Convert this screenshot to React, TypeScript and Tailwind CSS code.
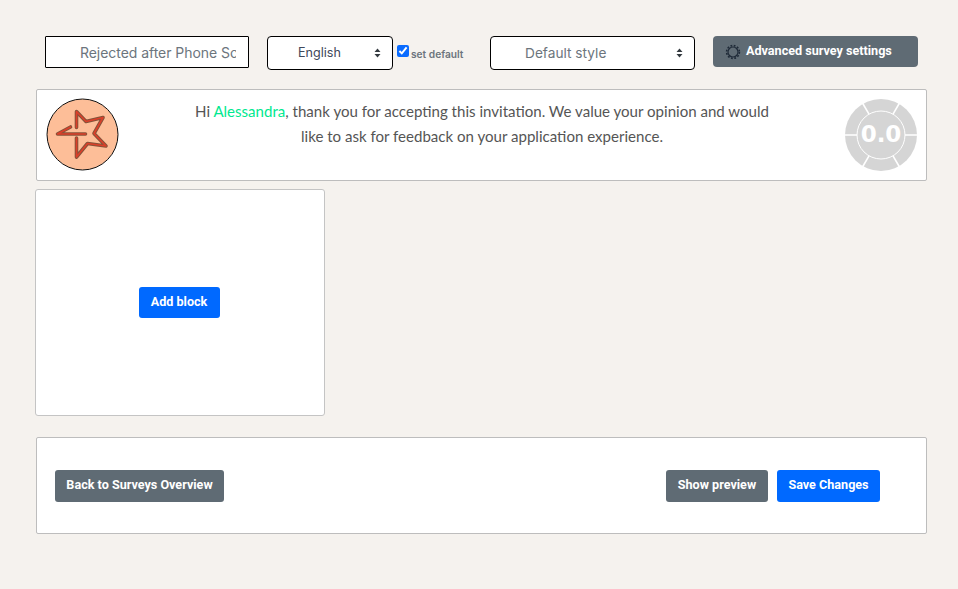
import React from "react";

const Arrows = () => (
  <svg width="7" height="10" viewBox="0 0 7 10" className="absolute right-[12px] top-[12px] pointer-events-none">
    <path d="M3.5 0.5 L6.5 4 H0.5 Z M3.5 9.5 L6.5 6 H0.5 Z" fill="#343a40" />
  </svg>
);

const StarLogo = () => (
  <svg width="74" height="74" viewBox="0 0 74 74" className="shrink-0">
    <circle cx="36.5" cy="36.5" r="35.5" fill="#fdbe98" stroke="#111" strokeWidth="1" />
    <g fill="none" strokeLinecap="round" strokeLinejoin="round">
      <g stroke="#85533a" strokeWidth="3.6">
        <path d="M30.5 29.5 V13.5 L40 23.5 L57 19.5 L48 35.5 L60 48 L41.5 45.5 L30.5 59 V40" />
        <path d="M39.5 36 H11.5 L24.5 29" />
      </g>
      <g stroke="#dc3f29" strokeWidth="1.6">
        <path d="M30.5 29.5 V13.5 L40 23.5 L57 19.5 L48 35.5 L60 48 L41.5 45.5 L30.5 59 V40" />
        <path d="M39.5 36 H11.5 L24.5 29" />
      </g>
    </g>
  </svg>
);

const Gauge = () => (
  <div className="relative w-[74px] h-[74px] shrink-0">
    <svg width="74" height="74" viewBox="0 0 74 74">
      <circle cx="37" cy="37" r="36" fill="#d5d5d5" />
      <circle cx="37" cy="37" r="24" fill="none" stroke="#fff" strokeWidth="1" />
      <g stroke="#fff" strokeWidth="1.6">
        <path d="M0 37 H13 M61 37 H74" />
        <path d="M18.5 5 L25 16.2 M49 57.8 L55.5 69" />
        <path d="M55.5 5 L49 16.2 M25 57.8 L18.5 69" />
      </g>
    </svg>
    <span className="absolute inset-0 flex items-center justify-center pb-[2px] text-[23px] font-bold text-white font-['DejaVu_Sans',sans-serif]">
      0.0
    </span>
  </div>
);

const Gear = () => (
  <svg width="16" height="16" viewBox="0 0 16 16" fill="none" stroke="#1f2a38" className="shrink-0">
    <circle cx="8" cy="8" r="5" strokeWidth="1.2" />
    <circle cx="8" cy="8" r="6.4" strokeWidth="1.6" strokeDasharray="1.8 1.55" />
  </svg>
);

export default function App() {
  return (
    <div className="min-h-[589px] w-[958px] bg-[#f5f2ee] pt-[36px] pl-[35px] font-['Roboto',sans-serif]">
      {/* Top Section */}
      <div className="flex items-start h-[34px] pl-[10px]">
        <input
          readOnly
          value="Rejected after Phone Screen"
          className="w-[204px] h-[32px] border border-black bg-white pl-[34px] pr-[12px] text-[14px] tracking-[-0.05px] text-[#6c757d] rounded-[1px] font-['Inter',sans-serif] outline-none"
        />
        <div className="relative ml-[18px] w-[126px] h-[34px]">
          <select className="appearance-none w-full h-full border border-black rounded-[4px] bg-white pl-[30px] text-[12.6px] text-[#40485a] font-['Inter',sans-serif] outline-none">
            <option>English</option>
          </select>
          <Arrows />
        </div>
        <label className="flex items-start ml-[4px] w-[93px]">
          <input type="checkbox" defaultChecked className="w-[12px] h-[12px] mt-[9px] accent-[#0a6cff] m-0" />
          <span className="ml-[2px] mt-[12px] text-[10.2px] leading-[13px] font-semibold text-[#6c757d] font-['Inter',sans-serif]">set default</span>
        </label>
        <div className="relative w-[205px] h-[34px]">
          <select className="appearance-none w-full h-full border border-black rounded-[4px] bg-white pl-[34px] pt-[1px] text-[13.7px] text-[#6c757d] font-['Inter',sans-serif] outline-none">
            <option>Default style</option>
          </select>
          <Arrows />
        </div>
        <button className="flex items-center ml-[18px] w-[205px] h-[31px] pl-[12px] rounded-[4px] bg-[#5f6b74] text-[12.6px] font-bold text-white">
          <Gear />
          <span className="ml-[5px]">Advanced survey settings</span>
        </button>
      </div>

      {/* Intro card */}
      <div className="flex items-center justify-between ml-[1px] mt-[19px] w-[891px] h-[92px] bg-white border border-[#bdbdbd] rounded-[2px] pl-[9px] pr-[8px]">
        <StarLogo />
        <p className="w-[590px] mb-[23px] text-center text-[15.07px] leading-[25px] text-[#555] font-['Lato',sans-serif]">
          Hi <span className="text-[#00e88f]">Alessandra</span>, thank you for accepting this invitation. We value your opinion and would like to ask for feedback on your application experience.
        </p>
        <Gauge />
      </div>

      {/* Block */}
      <div className="flex items-center justify-center mt-[8px] w-[290px] h-[227px] pr-[2px] bg-white border border-[#c4c4c4] rounded-[3px]">
        <button className="w-[81px] h-[31px] pb-[1px] rounded-[3px] bg-[#0069ff] text-[12.6px] font-bold text-white">Add block</button>
      </div>

      {/* Footer */}
      <div className="flex items-center ml-[1px] mt-[21px] w-[891px] h-[97px] bg-white border border-[#bdbdbd] rounded-[2px] pl-[18px]">
        <button className="w-[169px] h-[32px] pb-[1px] rounded-[3px] bg-[#5f6b74] text-[12.6px] font-bold text-white">Back to Surveys Overview</button>
        <button className="ml-[442px] w-[102px] h-[32px] pb-[1px] rounded-[3px] bg-[#5f6b74] text-[12.6px] font-bold text-white">Show preview</button>
        <button className="ml-[9px] w-[103px] h-[32px] pb-[1px] rounded-[3px] bg-[#0069ff] text-[12.6px] font-bold text-white">Save Changes</button>
      </div>
    </div>
  );
}
